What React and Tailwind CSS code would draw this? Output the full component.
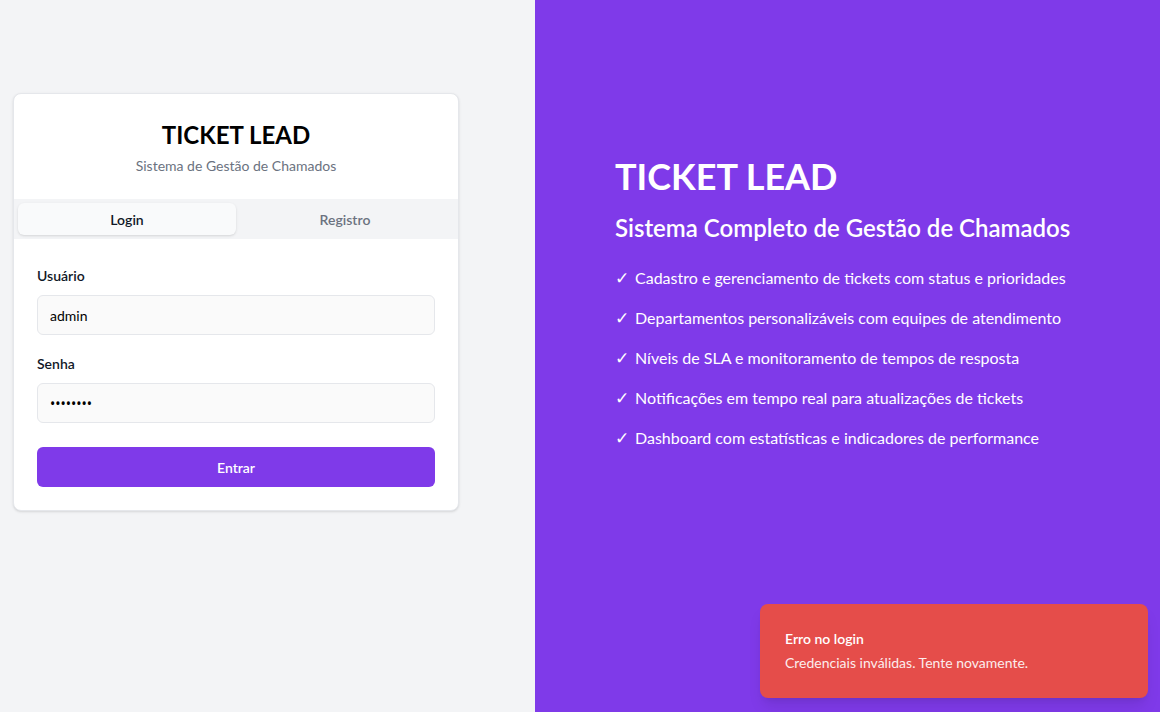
import { useState } from 'react'

const recursos = [
  'Cadastro e gerenciamento de tickets com status e prioridades',
  'Departamentos personalizáveis com equipes de atendimento',
  'Níveis de SLA e monitoramento de tempos de resposta',
  'Notificações em tempo real para atualizações de tickets',
  'Dashboard com estatísticas e indicadores de performance',
]

export default function App() {
  const [aba, setAba] = useState('login')
  const [usuario, setUsuario] = useState('admin')
  const [senha, setSenha] = useState('12345678')

  return (
    <div
      className="relative flex h-[712px] w-full overflow-hidden"
      style={{ fontFamily: 'Lato, "Noto Sans", sans-serif' }}
    >
      {/* Lado esquerdo - formulário */}
      <div className="w-[535px] flex-shrink-0 bg-[#f3f4f6] pl-[13px] pt-[93px]">
        <div className="w-[446px] rounded-lg border border-[#e5e7eb] bg-white shadow-sm">
          <div className="flex flex-col items-center pt-[24px] pb-[23px]">
            <h1 className="text-[24px] font-bold leading-[34px] text-black">TICKET LEAD</h1>
            <p className="mt-[4px] text-[14px] leading-[20px] text-[#6b7280]">Sistema de Gestão de Chamados</p>
          </div>

          <div className="flex h-[40px] items-center bg-[#f3f4f6] px-[4px]">
            <button
              onClick={() => setAba('login')}
              className={`h-[32px] flex-1 rounded-md text-[14px] font-semibold ${
                aba === 'login' ? 'bg-[#f9fafb] text-[#111827] shadow-sm' : 'text-[#6b7280]'
              }`}
            >
              Login
            </button>
            <button
              onClick={() => setAba('registro')}
              className={`h-[32px] flex-1 rounded-md text-[14px] font-semibold ${
                aba === 'registro' ? 'bg-[#f9fafb] text-[#111827] shadow-sm' : 'text-[#6b7280]'
              }`}
            >
              Registro
            </button>
          </div>

          <form className="px-[23px] pt-[27px] pb-[23px]" onSubmit={(e) => e.preventDefault()}>
            <label className="block text-[14px] font-semibold leading-[20px] text-[#111827]">Usuário</label>
            <input
              value={usuario}
              onChange={(e) => setUsuario(e.target.value)}
              className="mt-[9px] h-[40px] w-full rounded-md border border-[#e5e7eb] bg-[#fafafa] px-[12px] text-[14px] text-black outline-none"
            />
            <label className="mt-[19px] block text-[14px] font-semibold leading-[20px] text-[#111827]">Senha</label>
            <input
              type="password"
              value={senha}
              onChange={(e) => setSenha(e.target.value)}
              className="mt-[9px] h-[40px] w-full rounded-md border border-[#e5e7eb] bg-[#fafafa] px-[12px] font-['Noto_Sans'] text-[14px] text-black outline-none"
            />
            <button
              type="submit"
              className="mt-[24px] h-[40px] w-full rounded-md bg-[#7f3ae9] text-[14px] font-semibold text-white"
            >
              Entrar
            </button>
          </form>
        </div>
      </div>

      {/* Lado direito - apresentação */}
      <div className="flex-1 bg-[#7f3ae9] pl-[80px] pt-[153px] text-white">
        <h2 className="text-[36px] font-bold leading-[46px]">TICKET LEAD</h2>
        <h3 className="mt-[13px] text-[24px] font-semibold leading-[32px]">Sistema Completo de Gestão de Chamados</h3>
        <ul className="mt-[22px] flex flex-col gap-[16px]">
          {recursos.map((r) => (
            <li key={r} className="flex items-center gap-[6px] text-[16px] leading-[24px]">
              <span className="w-[14px] text-[17px]">✓</span>
              <span>{r}</span>
            </li>
          ))}
        </ul>
      </div>

      {/* Toast de erro */}
      <div className="absolute bottom-[14px] right-[12px] w-[388px] rounded-lg bg-[#e54d4a] px-[25px] pt-[25px] pb-[25px] text-white shadow-lg">
        <p className="text-[14px] font-semibold leading-[20px]">Erro no login</p>
        <p className="mt-[4px] text-[14px] leading-[20px] opacity-90">Credenciais inválidas. Tente novamente.</p>
      </div>
    </div>
  )
}
